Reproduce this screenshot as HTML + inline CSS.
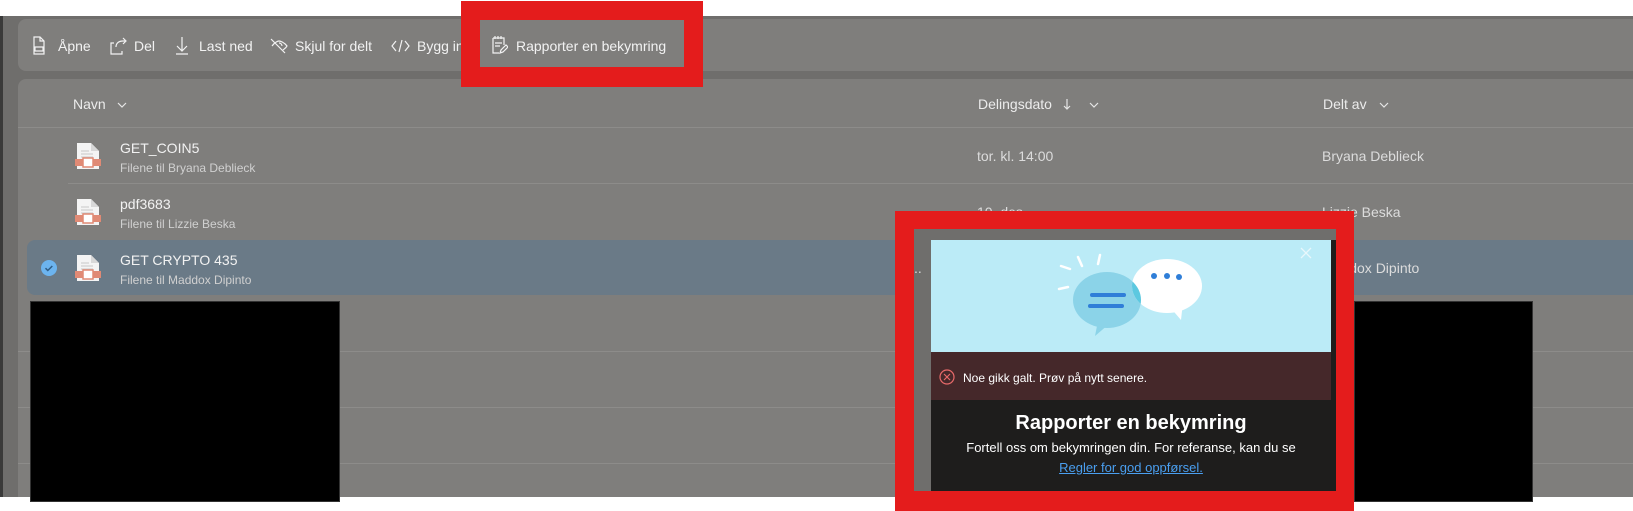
<!DOCTYPE html>
<html><head><meta charset="utf-8"><style>
*{margin:0;padding:0;box-sizing:border-box}
body{width:1633px;height:511px;background:#fff;position:relative;overflow:hidden;font-family:"Liberation Sans",sans-serif}
.a{position:absolute}
.t{position:absolute;white-space:nowrap;color:#f2f2f2;font-size:14px;line-height:16px}
.s{color:#d0d0d0;font-size:12px}
.h{color:#ececec;font-size:14px}
.sep{position:absolute;height:1px;background:#8d8c8a}
</style></head><body>
<div class="a" style="left:0;top:16px;width:1633px;height:481px;background:#6f6e6c"></div>
<div class="a" style="left:0;top:16px;width:3px;height:481px;background:#3a3a39"></div>
<!-- toolbar -->
<div class="a" style="left:18px;top:19px;width:1640px;height:52px;background:#7f7e7c;border-radius:8px"></div>
<svg class="a" style="left:28px;top:34px" width="460" height="24" fill="none" stroke="#f2f2f2" stroke-width="1.2">
 <path d="M6 3h6l4 4v13H6z M12 3v4h4 M7 13h8v4H7z"/>
 <path d="M86 9h-3v11h11v-3 M88 13c0-4 3-6 7-6h2 M95 4l3 3-3 3"/>
 <path d="M154 3v14 M149 12l5 5 5-5 M148 20h12"/>
 <path d="M243 5l14 14 M244 12c3-4 6-5 7-5s5 1 8 5c-1 2-3 3-4 4 M251 9a3 3 0 0 1 3 3"/>
 <path d="M368 7l-4 5 4 5 M377 7l4 5-4 5 M374 6l-3 12"/>
</svg>
<div class="t" style="left:58px;top:38px">Åpne</div>
<div class="t" style="left:134px;top:38px">Del</div>
<div class="t" style="left:199px;top:38px">Last ned</div>
<div class="t" style="left:295px;top:38px">Skjul for delt</div>
<div class="t" style="left:417px;top:38px">Bygg in</div>
<!-- list panel -->
<div class="a" style="left:18px;top:79px;width:1640px;height:418px;background:#7f7e7c;border-radius:8px 0 0 0"></div>
<svg class="a" style="left:0;top:95px" width="1633" height="20" fill="none" stroke="#e6e6e6" stroke-width="1.2">
 <path d="M118 8l4 4 4-4"/>
 <path d="M1090 8l4 4 4-4"/>
 <path d="M1380 8l4 4 4-4"/>
 <path d="M1067 4v10 M1064 11l3 3 3-3"/>
</svg>
<div class="t h" style="left:73px;top:96px">Navn</div>
<div class="t h" style="left:978px;top:96px">Delingsdato</div>
<div class="t h" style="left:1323px;top:96px">Delt av</div>
<div class="sep" style="left:18px;top:127px;width:1615px"></div>
<div class="sep" style="left:68px;top:183px;width:1565px"></div>
<div class="a" style="left:27px;top:240px;width:1610px;height:55px;background:#6a7a87;border-radius:8px 0 0 8px"></div>
<div class="sep" style="left:18px;top:351px;width:1615px"></div>
<div class="sep" style="left:18px;top:407px;width:1615px"></div>
<div class="sep" style="left:18px;top:463px;width:1615px"></div>
<svg class="a" style="left:41px;top:260px" width="16" height="16"><circle cx="8" cy="8" r="8" fill="#6cb4ef"/><path d="M4.5 8.2l2.3 2.3 4.5-4.5" stroke="#2f5d85" stroke-width="1.5" fill="none"/></svg>
<svg class="a" style="left:75px;top:143px" width="26" height="140">
 <defs><g id="f"><path d="M2 0h14l8 8v18H2z" fill="#f4f4f4"/><path d="M16 0v8h8" fill="#d8d8d8"/><path d="M6 8h8M6 11h12M6 14h12M6 17h12" stroke="#bbb" stroke-width=".8"/><rect x="0" y="16" width="26" height="7" fill="#e08a75"/><rect x="8" y="15" width="10" height="9" fill="#fff" stroke="#e08a75" stroke-width="1.5"/></g></defs>
 <use href="#f"/><use href="#f" y="56"/><use href="#f" y="112"/>
</svg>
<div class="t" style="left:120px;top:140px">GET_COIN5</div>
<div class="t s" style="left:120px;top:160px">Filene til Bryana Deblieck</div>
<div class="t" style="left:120px;top:196px">pdf3683</div>
<div class="t s" style="left:120px;top:216px">Filene til Lizzie Beska</div>
<div class="t" style="left:120px;top:252px">GET CRYPTO 435</div>
<div class="t s" style="left:120px;top:272px">Filene til Maddox Dipinto</div>
<div class="t" style="left:977px;top:148px;color:#dcdcdc">tor. kl. 14:00</div>
<div class="t" style="left:1322px;top:148px;color:#dcdcdc">Bryana Deblieck</div>
<div class="t" style="left:977px;top:204px;color:#dcdcdc">10. des</div>
<div class="t" style="left:1322px;top:204px;color:#dcdcdc">Lizzie Beska</div>
<div class="t" style="left:1322px;top:260px;color:#dcdcdc">Maddox Dipinto</div>
<div class="a" style="left:30px;top:301px;width:310px;height:201px;background:#000;border:1px solid #333"></div>
<div class="a" style="left:1354px;top:301px;width:179px;height:201px;background:#000;border:1px solid #333"></div>
<!-- red box top -->
<div class="a" style="left:461px;top:1px;width:242px;height:86px;background:#e41c1c"></div>
<div class="a" style="left:480px;top:20px;width:204px;height:47px;background:#7f7e7c"></div>
<svg class="a" style="left:490px;top:35px" width="18" height="20" fill="none" stroke="#f2f2f2" stroke-width="1.2"><path d="M3 3h11v7 M3 3v15h6 M5 1v3M8 1v3M11 1v3 M5 8h7M5 11h5 M10 18l1-3 5-5 2 2-5 5z"/></svg>
<div class="t" style="left:516px;top:38px">Rapporter en bekymring</div>
<!-- red box dialog -->
<div class="a" style="left:895px;top:211px;width:459px;height:300px;background:#e41c1c"></div>
<div class="a" style="left:914px;top:229px;width:422px;height:262px;background:#6f6e6c"></div>
<div class="a" style="left:931px;top:240px;width:405px;height:251px;background:#1e1d1c"></div>
<div class="a" style="left:931px;top:240px;width:400px;height:112px;background:#bbebf7"></div>
<svg class="a" style="left:931px;top:240px" width="400" height="112">
 <defs><clipPath id="cb"><ellipse cx="176" cy="60" rx="34" ry="28"/></clipPath></defs>
 <path d="M168 76l-4 20 14-12z" fill="#8bd3e8"/>
 <ellipse cx="176" cy="60" rx="34" ry="28" fill="#8bd3e8"/>
 <path d="M252 62l-2 18-12-14z" fill="#fff"/>
 <ellipse cx="236" cy="46" rx="35" ry="27" fill="#fff"/>
 <ellipse cx="236" cy="46" rx="35" ry="27" fill="#5cc8e0" clip-path="url(#cb)"/>
 <rect x="159" y="53" width="36" height="4" rx="2" fill="#2f7ed8"/>
 <rect x="157" y="64" width="36" height="4" rx="2" fill="#2f7ed8"/>
 <circle cx="223" cy="36" r="3" fill="#2f7ed8"/><circle cx="236" cy="36" r="3" fill="#2f7ed8"/><circle cx="248" cy="37" r="3" fill="#2f7ed8"/>
 <path d="M147 17l4 9 M169 15l-2 9 M130 26l9 3 M128 49l9-2" stroke="#fff" stroke-width="2.5" stroke-linecap="round"/>
 <path d="M370 8l10 10M380 8l-10 10" stroke="#e8f7fb" stroke-width="1.3"/>
</svg>
<div class="a" style="left:931px;top:352px;width:400px;height:48px;background:#45282a"></div>
<svg class="a" style="left:939px;top:369px" width="16" height="16" fill="none" stroke="#e86a6a" stroke-width="1.2"><circle cx="8" cy="8" r="7"/><path d="M5 5l6 6M11 5l-6 6"/></svg>
<div class="t" style="left:963px;top:370px;font-size:12px;color:#fff">Noe gikk galt. Prøv på nytt senere.</div>
<div class="t" style="left:931px;width:400px;top:411px;text-align:center;font-size:20px;line-height:24px;font-weight:bold;color:#fff">Rapporter en bekymring</div>
<div class="t" style="left:931px;width:400px;top:440px;text-align:center;font-size:13px;color:#fff">Fortell oss om bekymringen din. For referanse, kan du se</div>
<div class="t" style="left:931px;width:400px;top:460px;text-align:center;font-size:13px;color:#4a9ff0;text-decoration:underline">Regler for god oppførsel.</div>
<div class="t" style="left:914px;top:260px;color:#ddd">..</div>
</body></html>
